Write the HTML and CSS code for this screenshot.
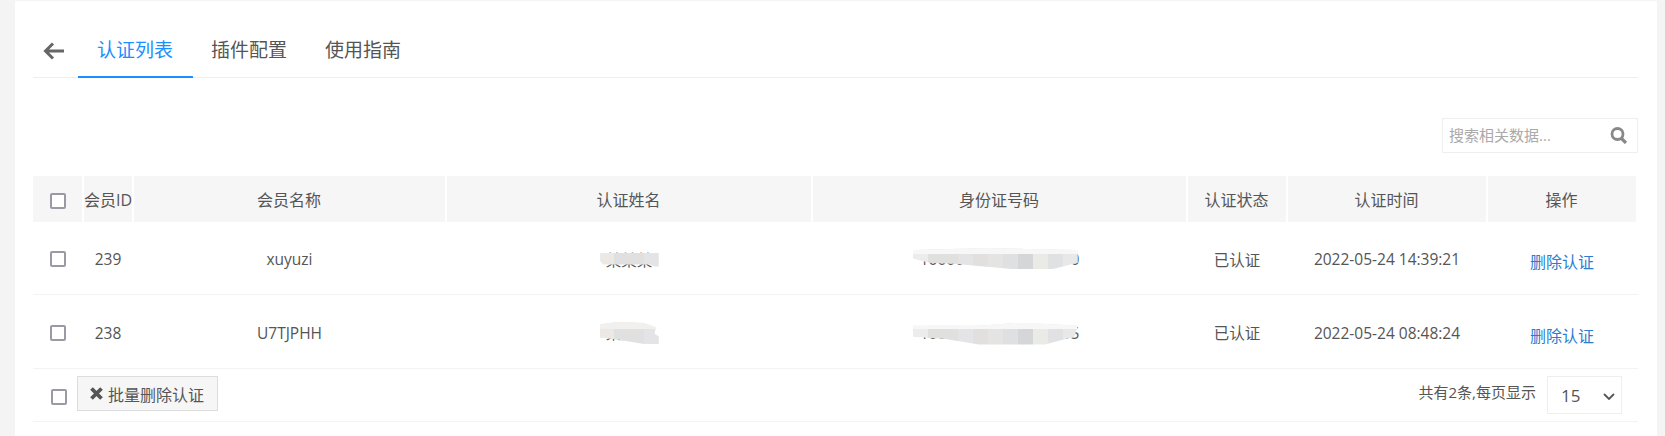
FILE: index.html
```html
<!DOCTYPE html>
<html lang="zh-CN">
<head>
  <meta charset="UTF-8">
  <title>认证列表</title>
  <link rel="stylesheet" href="styles.css">
</head>
<body>
  <div class="panel">
    <div class="tabs">
      <a class="back" href="#">
        <svg width="21" height="18" viewBox="0 0 21 18"><path d="M21 9H2.500M10 1.500 2.500 9l7.500 7.500" fill="none" stroke="#666" stroke-width="3"/></svg>
      </a>
      <a class="tab active" href="#">认证列表</a>
      <a class="tab" href="#">插件配置</a>
      <a class="tab" href="#">使用指南</a>
    </div>

    <div class="toolbar">
      <div class="search">
        <input type="text" placeholder="搜索相关数据...">
        <svg width="18" height="17" viewBox="0 0 18 17"><circle cx="7.500" cy="7" r="5.500" fill="none" stroke="#888" stroke-width="2.800"/><path d="M11.500 11.500 16 16" stroke="#888" stroke-width="3.200"/></svg>
      </div>
    </div>

    <table class="list">
      <colgroup>
        <col class="c-check"><col class="c-id"><col class="c-member"><col class="c-name">
        <col class="c-card"><col class="c-status"><col class="c-time"><col class="c-op">
      </colgroup>
      <thead>
        <tr>
          <th><input class="check" type="checkbox"></th>
          <th>会员ID</th>
          <th>会员名称</th>
          <th>认证姓名</th>
          <th>身份证号码</th>
          <th>认证状态</th>
          <th>认证时间</th>
          <th>操作</th>
        </tr>
      </thead>
      <tbody>
        <tr>
          <td><input class="check" type="checkbox"></td>
          <td>239</td>
          <td>xuyuzi</td>
          <td><span class="redacted">某某某<i class="smear smear-name-a"></i></span></td>
          <td><span class="redacted">100000000000000050<i class="smear smear-card-a"></i></span></td>
          <td>已认证</td>
          <td>2022-05-24 14:39:21</td>
          <td><a class="op" href="#">删除认证</a></td>
        </tr>
        <tr class="second">
          <td><input class="check" type="checkbox"></td>
          <td>238</td>
          <td>U7TJPHH</td>
          <td><span class="redacted">某某某<i class="smear smear-name-b"></i></span></td>
          <td><span class="redacted">100000000000000005<i class="smear smear-card-b"></i></span></td>
          <td>已认证</td>
          <td>2022-05-24 08:48:24</td>
          <td><a class="op" href="#">删除认证</a></td>
        </tr>
      </tbody>
    </table>

    <div class="footer">
      <div class="bulk">
        <input class="check" type="checkbox">
        <button class="btn" type="button">
          <svg width="13" height="13" viewBox="0 0 13 13"><path d="M1.500 1.500l10 10M11.500 1.500l-10 10" stroke="#555" stroke-width="3.800"/></svg>
          批量删除认证
        </button>
      </div>
      <div class="pager">
        <span>共有2条,每页显示</span>
        <div class="size">
          <select>
            <option>15</option>
          </select>
          <svg width="12" height="7" viewBox="0 0 12 7"><path d="M1 1l5 5 5-5" fill="none" stroke="#555" stroke-width="1.800"/></svg>
        </div>
      </div>
    </div>
  </div>
</body>
</html>
```

FILE: styles.css
```css
* {
  box-sizing: border-box;
}
html, body {
  height: 100%;
}
body {
  margin: 0;
  padding: 1px 8px 0 15px;
  background-color: #f4f4f4;
  font-family: 'Open Sans', 'Noto Sans CJK SC', sans-serif;
  font-size: 15px;
  color: #555;
  overflow: hidden;
}
a {
  text-decoration: none;
}
.panel {
  background-color: #fff;
  height: 100%;
  padding: 0 19px 0 18px;
}

/* tabs */
.tabs {
  display: flex;
  align-items: stretch;
  height: 77px;
  padding-top: 29px;
  border-bottom: 1px solid #eee;
}
.back {
  display: flex;
  align-items: center;
  width: 45px;
  padding: 0 0 6px 10px;
}
.tab {
  display: flex;
  align-items: center;
  padding: 0 19px 8px;
  margin-bottom: -1px;
  border-bottom: 2px solid transparent;
  font-size: 19px;
  color: #555;
}
.tab.active {
  padding-right: 20px;
  margin-right: -1px;
  color: #1890ff;
  border-bottom-color: #1890ff;
}

/* search */
.toolbar {
  display: flex;
  justify-content: flex-end;
  margin: 40px 0 23px;
}
.search {
  display: flex;
  align-items: center;
  width: 196px;
  height: 35px;
  border: 1px solid #eee;
  padding: 0 9px 0 6px;
}
.search input {
  flex: 1;
  min-width: 0;
  border: 0;
  padding: 0 0 2px;
  outline: 0;
  font: inherit;
  font-size: 15px;
}
.search input::placeholder {
  color: #aaa;
}

/* table */
.list {
  width: 1605px;
  table-layout: fixed;
  border-collapse: separate;
  border-spacing: 0;
  text-align: center;
}
.c-check { width: 51px; }
.c-id { width: 50px; }
.c-member { width: 313px; }
.c-name { width: 366px; }
.c-card { width: 375px; }
.c-status { width: 100px; }
.c-time { width: 200px; }
.c-op { width: 150px; }
.list th {
  height: 46px;
  padding: 0 1px 0 0;
  background-color: #f6f6f6;
  border-right: 2px solid #fff;
  font-size: 16px;
  font-weight: 400;
  white-space: nowrap;
}
.list th:first-child {
  padding-right: 0;
}
.list td {
  height: 73px;
  padding: 2px 2px 0 0;
  border-bottom: 1px solid #f3f3f3;
  font-size: 15.500px;
}
.list tr.second td {
  height: 74px;
}
.list td:first-child {
  padding: 0 1px 1px 0;
}
.check {
  appearance: none;
  display: inline-block;
  width: 16px;
  height: 16px;
  margin: 0;
  border: 2px solid #9b99a6;
  border-radius: 2px;
  background: #fff;
  vertical-align: middle;
}
.op {
  position: relative;
  top: 2px;
  font-size: 16px;
  color: #2d7ccf;
}

/* smudged personal data */
.redacted {
  position: relative;
  display: inline-block;
}
.smear {
  position: absolute;
}
.smear-name-a, .smear-name-b {
  left: -6px;
  width: 59px;
  background:
    linear-gradient(90deg, #ece8e6 0 14px, #e0e0e0 14px 44px, #e4e4e6 44px);
}
.smear-name-a {
  top: 5px;
  height: 14px;
  clip-path: polygon(2% 0, 100% 0, 100% 100%, 93% 100%, 85% 85%, 5% 85%, 0 55%, 0 20%);
}
.smear-name-b {
  top: 1px;
  height: 22px;
  background:
    linear-gradient(#f1f0ef 0 7px, transparent 7px),
    linear-gradient(90deg, #ece8e6 0 14px, #e0e0e0 14px 44px, #e4e4e6 44px);
  clip-path: polygon(0 10%, 30% 0, 75% 5%, 95% 25%, 93% 55%, 100% 65%, 100% 100%, 75% 100%, 30% 80%, 0 70%);
}
.smear-card-a, .smear-card-b {
  left: -7px;
  width: 165px;
  height: 21px;
  background:
    linear-gradient(#f7f7f7 0 6px, transparent 6px),
    linear-gradient(90deg, #ececec 0 15px, #e0e0de 15px 45px, #e4e4e6 45px 60px, #e1e0de 60px 75px, #e4e4e2 75px 90px, #dfe0e2 90px 105px, #d5d6d8 105px 120px, #eaeae6 120px 135px, #e0e1e3 135px 150px, #e8e8e8 150px);
}
.smear-card-a {
  top: 0;
  clip-path: polygon(0 10%, 45% 0, 100% 10%, 100% 70%, 85% 100%, 60% 100%, 25% 75%, 10% 70%, 0 50%);
}
.smear-card-b {
  top: 1px;
  height: 22px;
  clip-path: polygon(0 15%, 40% 15%, 65% 0, 100% 15%, 98% 65%, 80% 100%, 40% 100%, 20% 75%, 0 65%);
}

/* footer */
.footer {
  display: flex;
  justify-content: space-between;
  height: 53px;
  padding-top: 7px;
  border-bottom: 1px solid #f3f3f3;
}
.bulk {
  display: flex;
  align-items: flex-start;
}
.bulk .check {
  margin: 13px 10px 0 18px;
}
.btn {
  display: flex;
  align-items: center;
  gap: 5px;
  width: 141px;
  height: 35px;
  padding: 0 0 0 12px;
  background-color: #f6f6f6;
  border: 1px solid #ddd;
  font: inherit;
  font-size: 16px;
  color: #555;
}
.pager {
  display: flex;
  align-items: flex-start;
  gap: 11px;
  padding-right: 16px;
}
.pager span {
  margin-top: 5px;
}
.size {
  position: relative;
  width: 75px;
  height: 38px;
}
.size select {
  appearance: none;
  width: 100%;
  height: 100%;
  padding: 0 0 0 13px;
  border: 1px solid #eee;
  border-radius: 0;
  background: #fff;
  font: inherit;
  font-size: 17px;
  color: #555;
}
.size svg {
  position: absolute;
  right: 7px;
  top: 17px;
}
```
